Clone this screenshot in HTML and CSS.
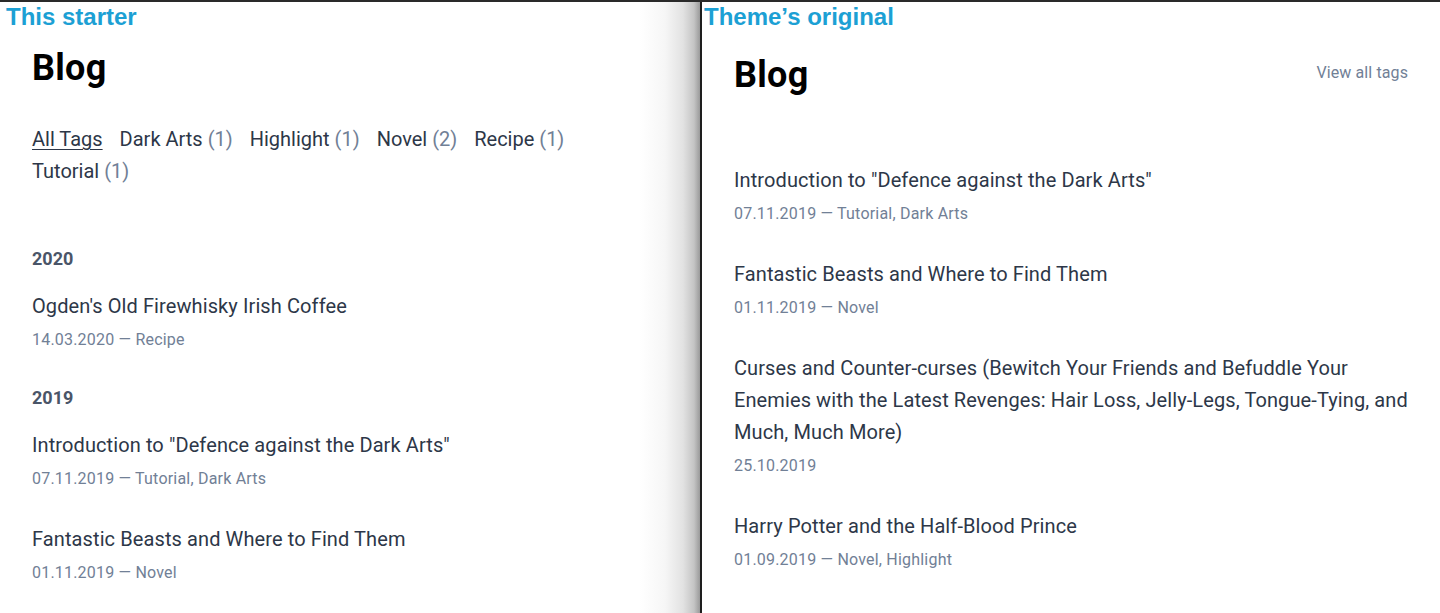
FILE: index.html
```html
<!DOCTYPE html>
<html lang="en">
<head>
<meta charset="utf-8">
<title>Blog comparison</title>
<link rel="stylesheet" href="styles.css">
</head>
<body>
<div class="compare">
  <section class="panel panel-left">
    <div class="caption">This starter</div>
    <div class="content">
      <header class="head">
        <h1 class="title">Blog</h1>
      </header>
      <nav class="tags">
        <a class="tag tag-active" href="#">All Tags</a>
        <a class="tag" href="#">Dark Arts <span class="count">(1)</span></a>
        <a class="tag" href="#">Highlight <span class="count">(1)</span></a>
        <a class="tag" href="#">Novel <span class="count">(2)</span></a>
        <a class="tag" href="#">Recipe <span class="count">(1)</span></a>
        <a class="tag" href="#">Tutorial <span class="count">(1)</span></a>
      </nav>
      <div class="year-group">
        <h2 class="year">2020</h2>
        <article class="post">
          <a class="post-title" href="#">Ogden's Old Firewhisky Irish Coffee</a>
          <div class="meta">14.03.2020 — Recipe</div>
        </article>
      </div>
      <div class="year-group">
        <h2 class="year">2019</h2>
        <article class="post">
          <a class="post-title" href="#">Introduction to "Defence against the Dark Arts"</a>
          <div class="meta">07.11.2019 — Tutorial, Dark Arts</div>
        </article>
        <article class="post">
          <a class="post-title" href="#">Fantastic Beasts and Where to Find Them</a>
          <div class="meta">01.11.2019 — Novel</div>
        </article>
      </div>
    </div>
  </section>
  <div class="divider"></div>
  <section class="panel panel-right">
    <div class="caption">Theme’s original</div>
    <div class="content">
      <header class="head head-right">
        <h1 class="title">Blog</h1>
        <a class="view-tags" href="#">View all tags</a>
      </header>
      <div class="posts">
        <article class="post">
          <a class="post-title" href="#">Introduction to "Defence against the Dark Arts"</a>
          <div class="meta">07.11.2019 — Tutorial, Dark Arts</div>
        </article>
        <article class="post">
          <a class="post-title" href="#">Fantastic Beasts and Where to Find Them</a>
          <div class="meta">01.11.2019 — Novel</div>
        </article>
        <article class="post">
          <a class="post-title" href="#">Curses and Counter-curses (Bewitch Your Friends and Befuddle Your Enemies with the Latest Revenges: Hair Loss, Jelly-Legs, Tongue-Tying, and Much, Much More)</a>
          <div class="meta">25.10.2019</div>
        </article>
        <article class="post">
          <a class="post-title" href="#">Harry Potter and the Half-Blood Prince</a>
          <div class="meta">01.09.2019 — Novel, Highlight</div>
        </article>
      </div>
    </div>
  </section>
</div>
</body>
</html>
```
FILE: styles.css
```css
* { box-sizing: border-box; }
html, body { margin: 0; padding: 0; }
body {
  background: #fff;
  font-family: Roboto, "Liberation Sans", sans-serif;
  color: #2d3748;
  height: 613px;
  overflow: hidden;
}
a { color: inherit; text-decoration: none; }
h1, h2 { margin: 0; }

.compare {
  display: flex;
  height: 613px;
  border-top: 2px solid #2a2a2a;
}
.panel-left {
  width: 700px;
  flex: none;
  background: linear-gradient(to right, #fff 0, #fff 640px, #f6f6f6 665px, #e2e2e2 683px, #c4c4c4 694px, #9a9a9a 700px);
}
.divider {
  width: 2px;
  flex: none;
  background: #1e1e1e;
}
.panel-right { flex: 1; }

.caption {
  font-family: "Liberation Sans", Arial, sans-serif;
  font-weight: 700;
  font-size: 24px;
  line-height: 28px;
  color: #1ca0d4;
  padding: 1px 0 0 6px;
}
.panel-right .caption { padding-left: 2px; }

.content { padding: 0 32px; }

.head { margin-top: 15px; height: 44px; display: flex; align-items: center; }
.head-right { margin-top: 22px; justify-content: space-between; }
.title {
  font-size: 36px;
  font-weight: 700;
  line-height: 44px;
  color: #000;
  letter-spacing: 0.3px;
}
.view-tags {
  font-size: 16px;
  line-height: 24px;
  color: #718096;
  margin-top: -4px;
  letter-spacing: 0.1px;
}

.tags {
  margin-top: 33px;
  display: flex;
  flex-wrap: wrap;
  column-gap: 17px;
  font-size: 20px;
  line-height: 32px;
  margin-bottom: 58px;
}
.tag { color: #2d3748; }
.tag-active { text-decoration: underline; text-underline-offset: 3px; text-decoration-thickness: 1px; }
.count { color: #718096; }

.year {
  font-size: 18px;
  font-weight: 700;
  line-height: 28px;
  color: #4a5568;
  margin-bottom: 17px;
}
.post { margin-bottom: 32px; }
.post-title {
  display: block;
  font-size: 20px;
  line-height: 32px;
  color: #2d3748;
  letter-spacing: 0.1px;
}
.meta {
  margin-top: 6px;
  font-size: 16px;
  line-height: 24px;
  color: #718096;
  letter-spacing: 0.2px;
}
.year-group + .year-group { margin-top: 3px; }

.posts { margin-top: 67px; }
```
